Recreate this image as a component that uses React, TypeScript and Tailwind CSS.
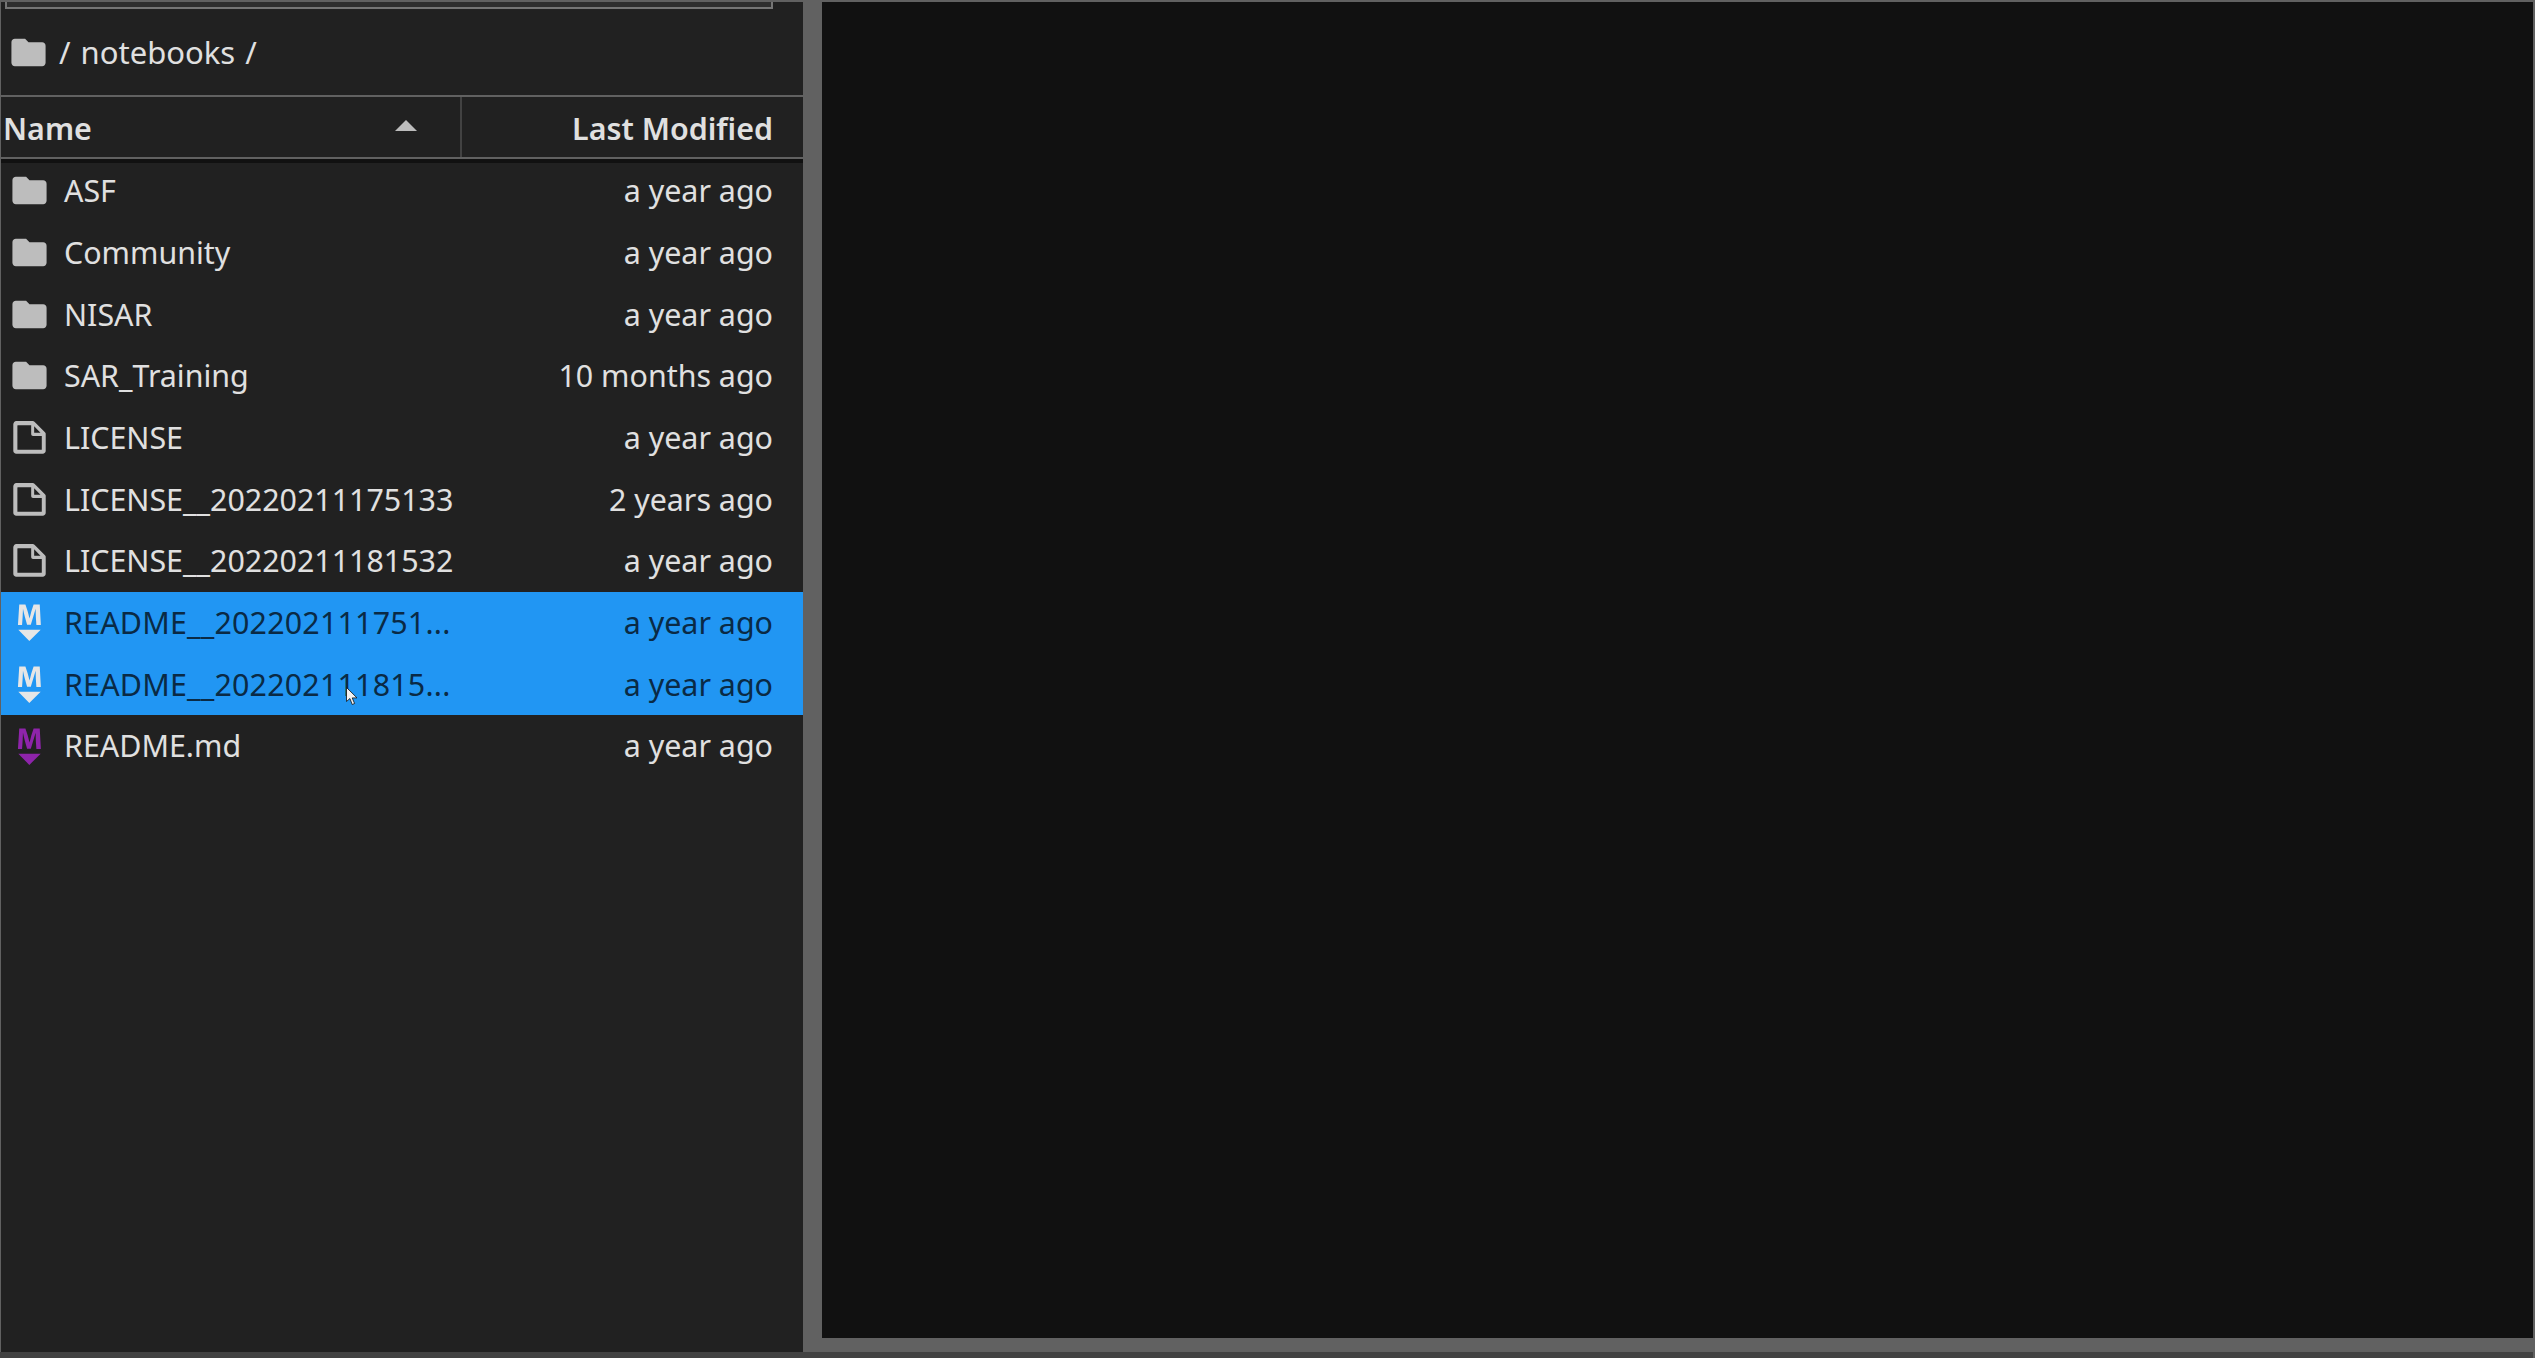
const FONT = "font-['Noto_Sans','Open_Sans',sans-serif]";

type Kind = "folder" | "file" | "markdown";

interface Item {
  name: string;
  modified: string;
  kind: Kind;
  selected?: boolean;
}

const items: Item[] = [
  { name: "ASF", modified: "a year ago", kind: "folder" },
  { name: "Community", modified: "a year ago", kind: "folder" },
  { name: "NISAR", modified: "a year ago", kind: "folder" },
  { name: "SAR_Training", modified: "10 months ago", kind: "folder" },
  { name: "LICENSE", modified: "a year ago", kind: "file" },
  { name: "LICENSE__20220211175133", modified: "2 years ago", kind: "file" },
  { name: "LICENSE__20220211181532", modified: "a year ago", kind: "file" },
  { name: "README__202202111751...", modified: "a year ago", kind: "markdown", selected: true },
  { name: "README__202202111815...", modified: "a year ago", kind: "markdown", selected: true },
  { name: "README.md", modified: "a year ago", kind: "markdown" },
];

function FolderIcon() {
  return (
    <svg aria-hidden="true" viewBox="0 0 24 24" className="h-[41px] w-[41px] shrink-0 fill-[#bdbdbd]">
      <path d="M10 4H4c-1.1 0-1.99.9-1.99 2L2 18c0 1.1.9 2 2 2h16c1.1 0 2-.9 2-2V8c0-1.1-.9-2-2-2h-8l-2-2z" />
    </svg>
  );
}

function FileIcon() {
  return (
    <svg aria-hidden="true" viewBox="0 0 22 22" className="h-[41px] w-[41px] shrink-0 fill-[#bdbdbd]">
      <path d="M19.3 8.2l-5.5-5.5c-.3-.3-.7-.5-1.2-.5H3.9c-.8.1-1.6.9-1.6 1.8v14.1c0 .9.7 1.6 1.6 1.6h14.2c.9 0 1.6-.7 1.6-1.6V9.4c.1-.5-.1-.9-.4-1.2zm-5.8-3.3l3.4 3.6h-3.4V4.9zm3.9 12.7H4.7c-.1 0-.2 0-.2-.2V4.7c0-.2.1-.3.2-.3h7.2v4.4s0 .8.3 1.1c.3.3 1.1.3 1.1.3h4.3v7.2s-.1.2-.2.2z" />
    </svg>
  );
}

function MarkdownIcon({ selected }: { selected?: boolean }) {
  return (
    <svg
      aria-hidden="true"
      viewBox="0 0 22 22"
      className={`h-[41px] w-[41px] shrink-0 ${selected ? "fill-[#e6e6e6]" : "fill-[#8e24aa]"}`}
    >
      <path d="M5 14.9h12l-6.1 6zm9.4-6.8c0-1.3-.1-2.9-.1-4.5-.4 1.4-.9 2.9-1.3 4.3l-1.3 4.3h-2L8.5 7.9c-.4-1.3-.7-2.9-1-4.3-.1 1.6-.1 3.2-.2 4.6L7 12.4H4.8l.7-11h3.3L10 5c.4 1.2.7 2.7 1 3.9.3-1.2.7-2.6 1-3.9l1.2-3.7h3.3l.6 11h-2.4l-.3-4.2z" />
    </svg>
  );
}

function Row({ item }: { item: Item }) {
  return (
    <li
      className={`flex h-[61.7px] items-center pl-[8px] pr-[30px] ${
        item.selected ? "bg-[#2196f3] text-[#0a2a45]" : "text-[#e0e0e0]"
      }`}
    >
      {item.kind === "folder" && <FolderIcon />}
      {item.kind === "file" && <FileIcon />}
      {item.kind === "markdown" && <MarkdownIcon selected={item.selected} />}
      <span className={`ml-[14px] flex-1 whitespace-nowrap pt-px ${item.selected ? "tracking-[0.2px]" : ""}`}>
        {item.name}
      </span>
      <span className="whitespace-nowrap pt-px">{item.modified}</span>
    </li>
  );
}

export default function App() {
  return (
    <div className={`${FONT} relative flex h-[1358px] w-[2535px] flex-col overflow-hidden bg-[#616161] pt-[2px] pr-[2px] text-[30.4px] leading-none`}>
      <div className="flex min-h-0 flex-1">
        {/* File browser */}
        <aside className="ml-px flex w-[802px] shrink-0 flex-col bg-[#212121]">
          {/* Filter box, scrolled mostly out of view */}
          <div className="ml-[4px] mr-[30px] h-[7px] shrink-0 border-x-2 border-b-2 border-[#757575] bg-[#2e2e2e]" />

          <div className="flex h-[86px] shrink-0 items-center pl-[7px] text-[#e0e0e0]">
            <FolderIcon />
            <span className="ml-[10px] pt-px text-[31px] [word-spacing:2px]">/ notebooks /</span>
          </div>

          <div className="relative z-10 flex h-[64px] shrink-0 border-y-2 border-[#616161] font-semibold text-[#e0e0e0] shadow-[0_4px_0_#111111]">
            <div className="flex w-[461px] items-center justify-between border-r-2 border-[#424242] pl-[2px] pr-[43px]">
              <span className="pt-[5px]">Name</span>
              <span className="mb-[4px] h-0 w-0 border-x-[11px] border-b-[11px] border-x-transparent border-b-[#bdbdbd]" />
            </div>
            <div className="flex flex-1 items-center justify-end pt-[5px] pr-[30px]">Last Modified</div>
          </div>

          <ul className="mt-px">
            {items.map((item) => (
              <Row key={item.name} item={item} />
            ))}
          </ul>
        </aside>

        {/* Main work area */}
        <main className="ml-[19px] mb-[14px] flex-1 bg-[#111111]" />
      </div>

      <div className="h-[6px] shrink-0 bg-[#424242]" />

      {/* Mouse pointer */}
      <svg aria-hidden="true" viewBox="0 0 12 19" className="absolute left-[346px] top-[687px] h-[19px] w-[12px]">
        <path d="M0.5 0.5v14l3.4-3 2.3 6 2.4-1-2.4-5.6h4.8z" fill="#f2f2f2" stroke="#111111" strokeWidth="0.8" />
      </svg>
    </div>
  );
}
